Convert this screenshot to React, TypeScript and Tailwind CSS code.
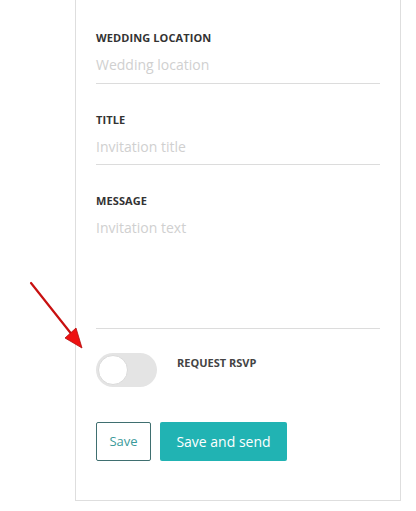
import React from "react";

const font = { fontFamily: '"Open Sans", "Liberation Sans", sans-serif' };

function Field({ label, placeholder, boxClass }: { label: string; placeholder: string; boxClass: string }) {
  return (
    <div className="flex flex-col">
      <div className="text-[11px] leading-4 font-bold text-[#333] tracking-[0.1px]">{label}</div>
      <div className={`mt-[9px] border-b border-[#dcdcdc] text-[14px] leading-5 text-[#d0d0d0] ${boxClass}`}>
        {placeholder}
      </div>
    </div>
  );
}

export default function App() {
  return (
    <div className="relative w-[416px] h-[511px] bg-white overflow-hidden" style={font}>
      <div className="ml-[75px] w-[326px] h-[501px] border-x border-b border-[#dedede] pl-[20px] pr-[20px] pt-[30px] flex flex-col">
        <Field label="WEDDING LOCATION" placeholder="Wedding location" boxClass="h-[29px]" />
        <div className="h-[28px]" />
        <Field label="TITLE" placeholder="Invitation title" boxClass="h-[28px]" />
        <div className="h-[28px]" />
        <Field label="MESSAGE" placeholder="Invitation text" boxClass="h-[111px]" />

        <div className="mt-[24px] flex items-start gap-[20px]">
          <div className="relative w-[61px] h-[34px] rounded-full bg-[#e4e4e4]">
            <div className="absolute left-[2px] top-[2px] w-[30px] h-[30px] rounded-full bg-white border border-[#dadada]" />
          </div>
          <div className="mt-[2px] text-[11px] leading-4 font-bold text-[#444]">REQUEST RSVP</div>
        </div>

        <div className="mt-[35px] flex gap-[9px]">
          <button className="w-[55px] h-[39px] rounded-[2px] border border-[#3f6f70] bg-white text-[13px] text-[#3b9a9a]">
            Save
          </button>
          <button className="w-[127px] h-[39px] rounded-[2px] bg-[#21b3b3] text-[14px] text-white">
            Save and send
          </button>
        </div>
      </div>

      <svg className="absolute left-0 top-0" width="416" height="511" viewBox="0 0 416 511">
        <line x1="31" y1="283" x2="73" y2="336" stroke="#c81010" strokeWidth="2.2" strokeLinecap="round" />
        <polygon points="82,348 65,338 76,328" fill="#ee1111" stroke="#b30d0d" strokeWidth="0.8" />
      </svg>
    </div>
  );
}
